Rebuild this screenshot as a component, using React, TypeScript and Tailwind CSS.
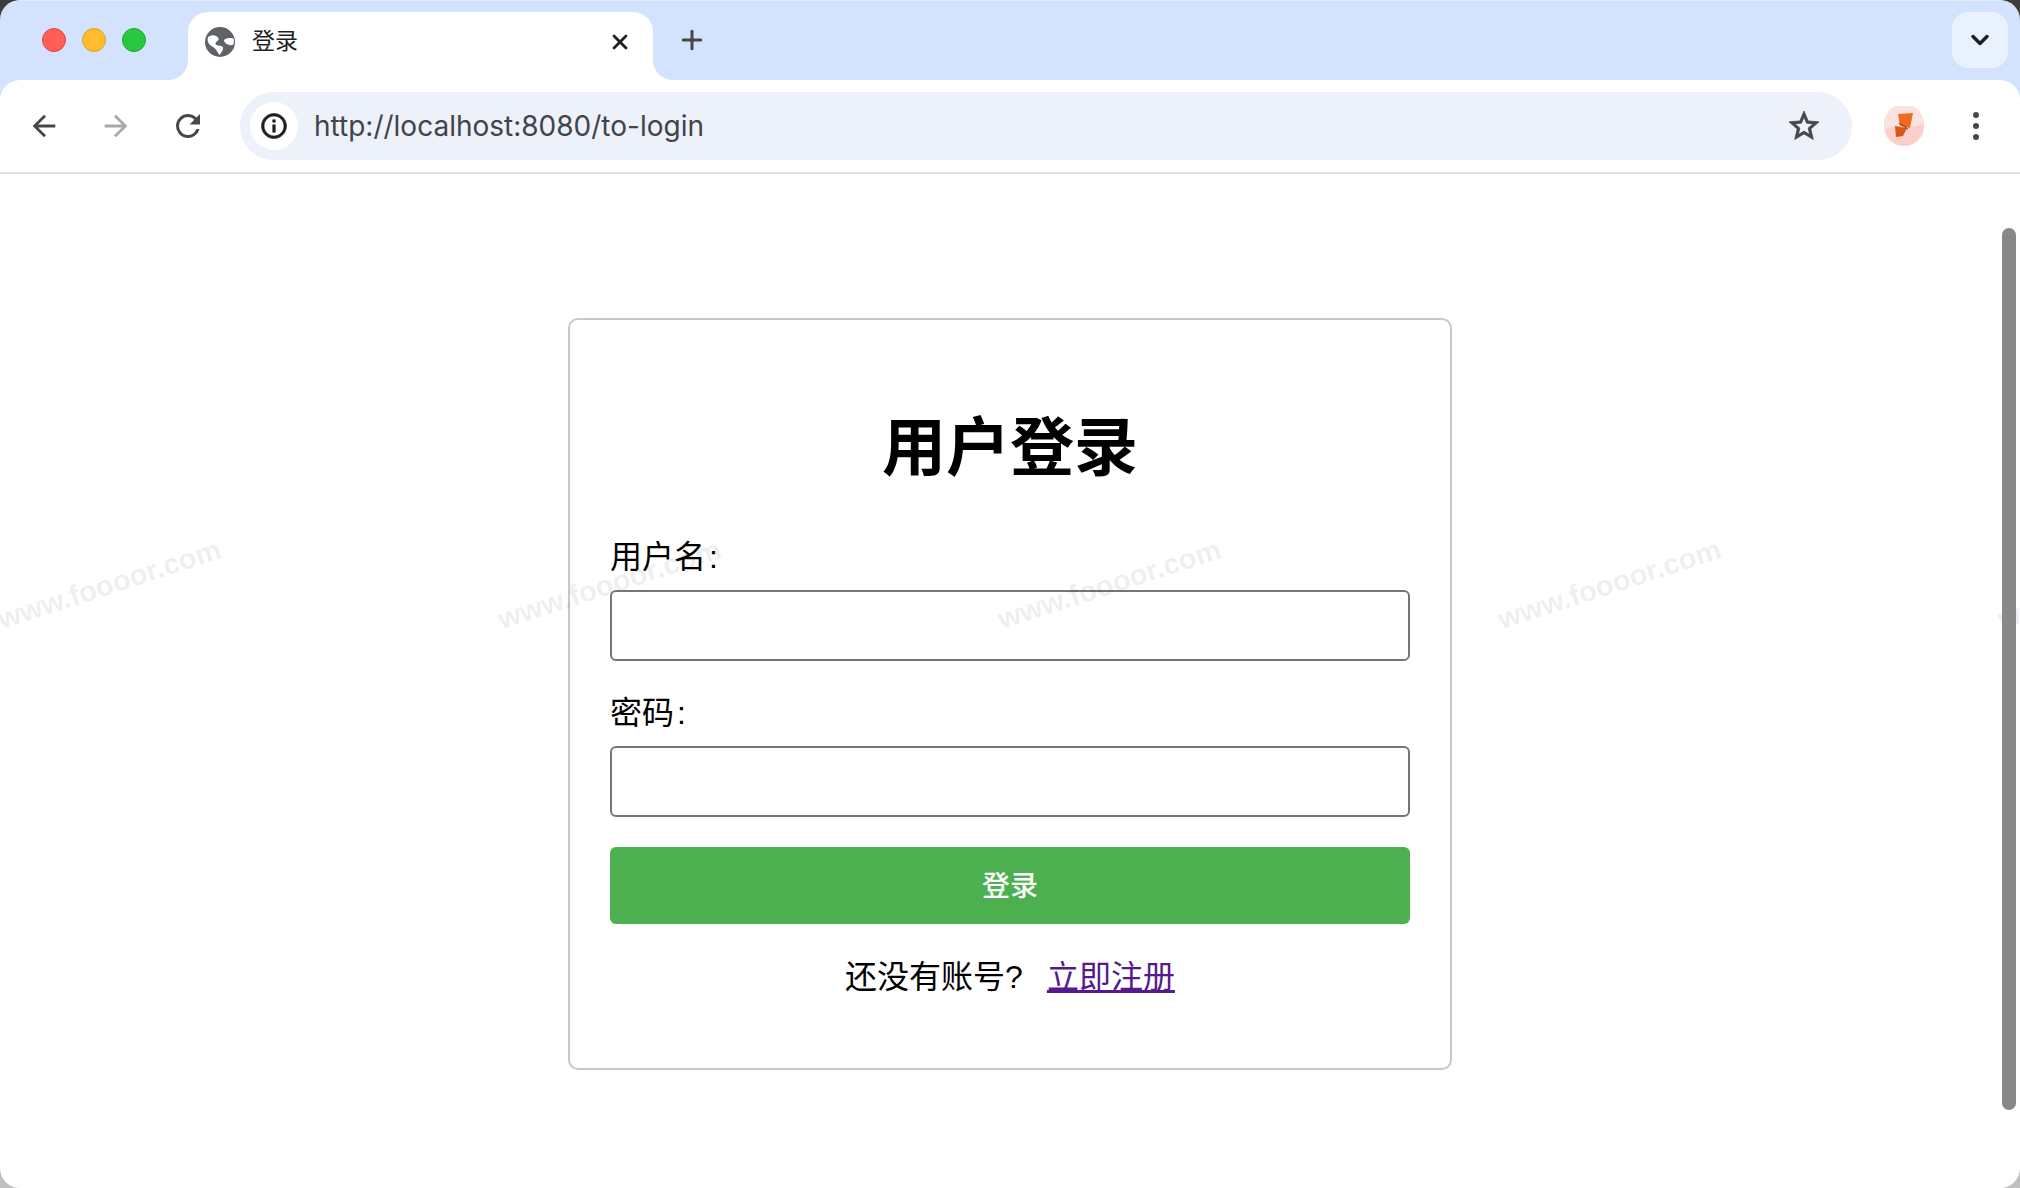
import { ChevronDown, Plus, X } from "lucide-react";

const CJK = "font-['Liberation_Sans','Noto_Sans_CJK_SC',sans-serif]";

function Globe() {
  return (
    <svg width="30" height="30" viewBox="0 0 30 30">
      <circle cx="15" cy="15" r="15" fill="#5f6368" />
      {/* white swooshes of the default favicon */}
      <path d="M3 10c3-2 6-2.500 8-1 1.500 1.200 3 1.500 2.500 3.500-.5 2-3 2-3 4 0 2 3 2 5.500 2.500 2.500.5 2.500 2.500 1.500 4.500-.7 1.500-2 3-3 4.500-2-2-2.500-5-5-7-2.500-1.500-5.500-3-6.500-6-.5-1.500-.5-3 0-5z" fill="#fff" />
      <path d="M19 13c2.500-2 6-2.500 9.500-1.500.5 2 .5 4-.2 6-2.300 1.500-4.800.5-6.300-.5-1.500-1-3.500-2.500-3-4z" fill="#fff" />
    </svg>
  );
}

function Avatar() {
  return (
    <svg width="40" height="40" viewBox="0 0 40 40">
      <circle cx="20" cy="20" r="20" fill="#fbd0ca" />
      <path d="M0 18a20 20 0 0 1 40 0l-16 4-14-2L1 24z" fill="#f9e2df" />
      <path d="M14 8l15-1-3 15-10-2z" fill="#ee6a1f" />
      <path d="M11 20l12 2-4 8-7 1z" fill="#dc5716" />
      <path d="M15 17l9 6" stroke="#8a3310" strokeWidth="1" fill="none" />
    </svg>
  );
}

function Icon({ d, size, className, bold }: { d: string; size: number; className: string; bold?: boolean }) {
  return (
    <svg
      width={size}
      height={size}
      viewBox="0 0 24 24"
      className={className}
      fill="currentColor"
      stroke={bold ? "currentColor" : "none"}
      strokeWidth={bold ? 0.5 : 0}
    >
      <path d={d} />
    </svg>
  );
}

const ARROW_LEFT = "M20 11H7.830l5.590-5.590L12 4l-8 8 8 8 1.410-1.410L7.830 13H20v-2z";
const ARROW_RIGHT = "M12 4l-1.410 1.410L16.170 11H4v2h12.170l-5.580 5.590L12 20l8-8z";
const REFRESH = "M17.650 6.350A7.958 7.958 0 0 0 12 4a8 8 0 1 0 7.730 10h-2.080A6 6 0 1 1 12 6c1.660 0 3.140.69 4.220 1.780L13 11h7V4l-2.350 2.350z";
const INFO = "M11 7h2v2h-2zm0 4h2v6h-2zm1-9C6.480 2 2 6.480 2 12s4.480 10 10 10 10-4.480 10-10S17.520 2 12 2zm0 18c-4.410 0-8-3.590-8-8s3.590-8 8-8 8 3.590 8 8-3.590 8-8 8z";
const STAR = "M22 9.240l-7.190-.62L12 2 9.190 8.630 2 9.240l5.460 4.730L5.820 21 12 17.270 18.180 21l-1.630-7.030L22 9.240zM12 15.400l-3.760 2.270 1-4.280-3.320-2.880 4.380-.38L12 6.100l1.710 4.040 4.380.38-3.320 2.880 1 4.280L12 15.400z";

function Watermarks() {
  return (
    <div className="absolute left-[-141px] top-[564px] flex pointer-events-none">
      {[0, 1, 2, 3, 4].map((i) => (
        <div key={i} className="w-[500px] text-center">
          <span className="inline-block rotate-[-18deg] font-['Liberation_Sans',sans-serif] font-bold text-[29px] leading-[40px] text-black/[0.08]">
            www.foooor.com
          </span>
        </div>
      ))}
    </div>
  );
}

export default function App() {
  return (
    <div className={`relative w-[2020px] h-[1188px] overflow-hidden bg-linear-to-b from-[#3c3c3c] to-[#c0c0c0] ${CJK}`}>
      {/* Tab strip */}
      <div className="h-[80px] flex bg-[#d3e3fd] rounded-t-[20px] border-t border-[#e3ecfb]">
        <div className="w-[188px] flex items-center gap-[16px] pl-[42px] pb-[2px]">
          <span className="w-[24px] h-[24px] rounded-full bg-[#ff5f57] border border-[#e0443e]" />
          <span className="w-[24px] h-[24px] rounded-full bg-[#febc2e] border border-[#dea123]" />
          <span className="w-[24px] h-[24px] rounded-full bg-[#28c840] border border-[#1aab29]" />
        </div>

        <div className="relative mt-[11px] w-[465px] h-[68px] bg-white rounded-t-[20px] flex items-center pl-[17px] pr-[21px] pb-[8px]">
          <span className="absolute left-[-20px] bottom-0 w-[20px] h-[20px] bg-white">
            <span className="block w-full h-full bg-[#d3e3fd] rounded-br-[20px]" />
          </span>
          <span className="absolute right-[-20px] bottom-0 w-[20px] h-[20px] bg-white">
            <span className="block w-full h-full bg-[#d3e3fd] rounded-bl-[20px]" />
          </span>
          <Globe />
          <span className="ml-[17px] text-[23px] leading-[26px] mb-[3px] text-[#1f1f1f]">登录</span>
          <X className="ml-auto text-[#1f1f1f]" size={24} strokeWidth={2.8} />
        </div>

        <div className="ml-[24px] flex items-center pb-[2px]">
          <Plus className="text-[#474747]" size={30} strokeWidth={2.4} />
        </div>

        <div className="ml-auto mr-[12px] mt-[11px] w-[56px] h-[56px] rounded-[16px] bg-[#e9f1fd] flex items-center justify-center">
          <ChevronDown className="text-[#1f1f1f]" size={28} strokeWidth={3} />
        </div>
      </div>

      {/* Toolbar */}
      <div className="relative bg-[#d3e3fd]">
        <div className="h-[94px] bg-white rounded-t-[20px] border-b-2 border-[#e0e0e0] flex items-center">
          <div className="w-[240px] flex items-center pl-[8px]">
            <span className="w-[72px] flex justify-center">
              <Icon d={ARROW_LEFT} size={34} className="text-[#474747]" />
            </span>
            <span className="w-[72px] flex justify-center">
              <Icon d={ARROW_RIGHT} size={34} className="text-[#a8a8a8]" />
            </span>
            <span className="w-[72px] flex justify-center">
              <Icon d={REFRESH} size={36} className="text-[#474747]" />
            </span>
          </div>

          <div className="w-[1612px] h-[68px] rounded-full bg-[#ecf1fa] flex items-center pl-[10px] pr-[30px]">
            <span className="w-[48px] h-[48px] rounded-full bg-white flex items-center justify-center">
              <Icon d={INFO} size={30} bold className="text-[#1f1f1f]" />
            </span>
            <span className="ml-[16px] font-['Inter',sans-serif] text-[28px] text-[#41444a]">
              http://localhost:8080/to-login
            </span>
            <Icon d={STAR} size={36} bold className="ml-auto text-[#474747]" />
          </div>

          <div className="ml-[32px]">
            <Avatar />
          </div>

          <div className="ml-[49px] flex flex-col gap-[5px]">
            <span className="w-[6px] h-[6px] rounded-full bg-[#474747]" />
            <span className="w-[6px] h-[6px] rounded-full bg-[#474747]" />
            <span className="w-[6px] h-[6px] rounded-full bg-[#474747]" />
          </div>
        </div>
      </div>

      {/* Page */}
      <div className="h-[1014px] bg-white rounded-b-[20px] pt-[144px]">
        <div className="mx-auto w-[884px] h-[752px] border-2 border-[#c8c8c8] rounded-[10px] px-[40px] pt-[40px] text-black">
          <h1 className="h-[174px] pt-[2px] flex items-center justify-center text-[64px] font-bold">用户登录</h1>

          <label className="block text-[32px] leading-[46px] h-[46px] mb-[10px]">
            用户名<span className="ml-[3px]">:</span>
          </label>
          <input className="block w-full h-[71px] border-2 border-[#767676] rounded-[6px] mb-[29px]" />

          <label className="block text-[32px] leading-[46px] h-[46px] mb-[10px]">
            密码<span className="ml-[3px]">:</span>
          </label>
          <input className="block w-full h-[71px] border-2 border-[#767676] rounded-[6px] mb-[30px]" />

          <button className="block w-full h-[77px] pt-[2px] rounded-[6px] bg-[#4caf50] text-white text-[28px] font-medium">登录</button>

          <p className="mt-[30px] text-center text-[32px] leading-[46px]">
            还没有账号?
            <a href="#" className="ml-[24px] underline text-[#551a8b]">立即注册</a>
          </p>
        </div>
      </div>

      <Watermarks />

      {/* Scrollbar */}
      <div className="absolute left-[2002px] top-[228px] w-[14px] h-[882px] rounded-full bg-[#888888]" />
    </div>
  );
}
